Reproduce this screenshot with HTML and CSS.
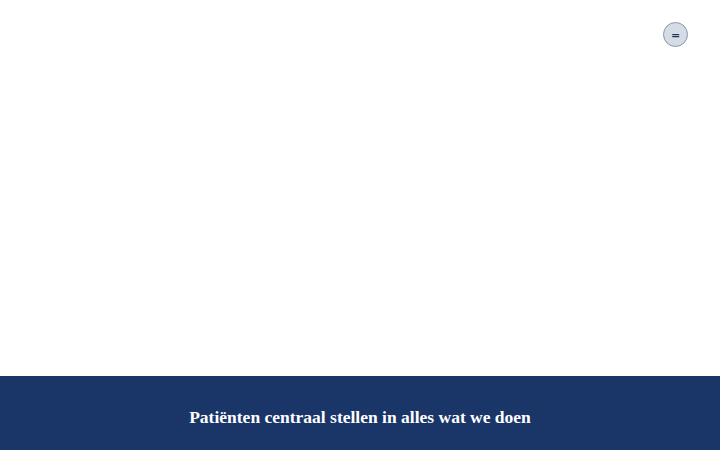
FILE: index.html
```html
<!DOCTYPE html>
<html lang="nl">
<head>
<meta charset="utf-8">
<link rel="stylesheet" href="styles.css">
</head>
<body>
<div class="page">
  <header class="top">
    <button class="menu-btn" aria-label="Menu"><span class="eq">=</span></button>
  </header>
  <main class="hero"></main>
  <section class="band">
    <h2 class="band-title">Patiënten centraal stellen in alles wat we doen</h2>
  </section>
</div>
</body>
</html>
```
FILE: styles.css
```css
html, body {
  margin: 0;
  padding: 0;
  background: #ffffff;
}
.page {
  width: 720px;
  height: 450px;
  display: flex;
  flex-direction: column;
  overflow: hidden;
}
.top {
  display: flex;
  justify-content: flex-end;
  padding: 22px 32px 0 0;
  height: 26px;
}
.menu-btn {
  width: 25px;
  height: 25px;
  border-radius: 50%;
  border: 1px solid #8497b0;
  background: #d6dce4;
  padding: 2px 0 0 0;
  margin: 0;
  display: flex;
  align-items: center;
  justify-content: center;
  color: #1b3668;
  font-family: "DejaVu Sans", sans-serif;
  font-size: 11px;
  font-weight: bold;
  line-height: 1;
}
.hero {
  flex: 1;
}
.band {
  height: 74px;
  background: #1a3668;
  display: flex;
  justify-content: center;
  padding-top: 29px;
  box-sizing: border-box;
}
.band-title {
  margin: 0;
  color: #ffffff;
  font-family: "Liberation Serif", serif;
  font-weight: bold;
  font-size: 17.5px;
  line-height: 24px;
}
```
